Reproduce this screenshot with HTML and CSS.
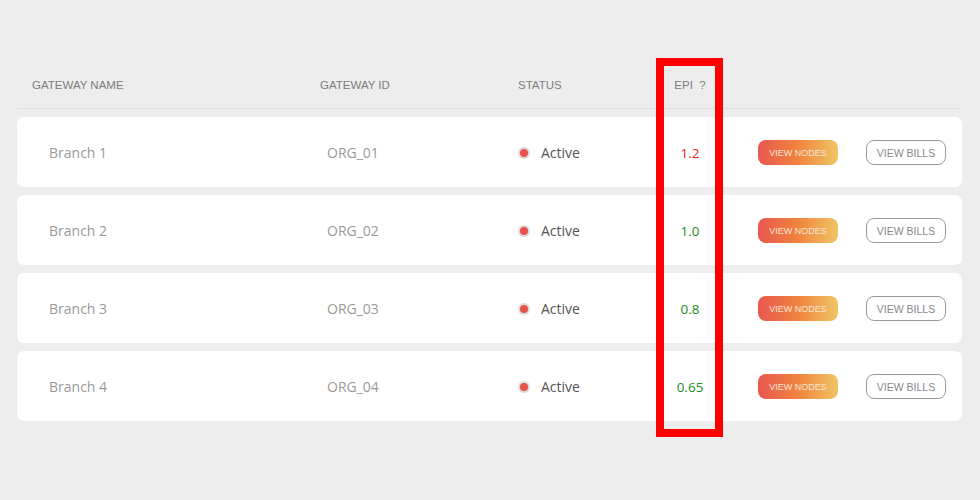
FILE: index.html
```html
<!DOCTYPE html>
<html>
<head>
<meta charset="utf-8">
<link rel="stylesheet" href="styles.css">
</head>
<body>
<div class="page">
  <div class="table">
    <div class="head">
      <div class="h h-name">GATEWAY NAME</div>
      <div class="h h-id">GATEWAY ID</div>
      <div class="h h-status">STATUS</div>
      <div class="h h-epi">EPI&nbsp; ?</div>
      <div></div>
      <div></div>
    </div>
    <div class="row">
      <div class="c-name">Branch 1</div>
      <div class="c-id">ORG_01</div>
      <div class="c-status"><span class="dot"></span>Active</div>
      <div class="c-epi red">1.2</div>
      <div class="c-nodes"><span class="btn-nodes">VIEW NODES</span></div>
      <div class="c-bills"><span class="btn-bills">VIEW BILLS</span></div>
    </div>
    <div class="row">
      <div class="c-name">Branch 2</div>
      <div class="c-id">ORG_02</div>
      <div class="c-status"><span class="dot"></span>Active</div>
      <div class="c-epi green">1.0</div>
      <div class="c-nodes"><span class="btn-nodes">VIEW NODES</span></div>
      <div class="c-bills"><span class="btn-bills">VIEW BILLS</span></div>
    </div>
    <div class="row">
      <div class="c-name">Branch 3</div>
      <div class="c-id">ORG_03</div>
      <div class="c-status"><span class="dot"></span>Active</div>
      <div class="c-epi green">0.8</div>
      <div class="c-nodes"><span class="btn-nodes">VIEW NODES</span></div>
      <div class="c-bills"><span class="btn-bills">VIEW BILLS</span></div>
    </div>
    <div class="row">
      <div class="c-name">Branch 4</div>
      <div class="c-id">ORG_04</div>
      <div class="c-status"><span class="dot"></span>Active</div>
      <div class="c-epi green">0.65</div>
      <div class="c-nodes"><span class="btn-nodes">VIEW NODES</span></div>
      <div class="c-bills"><span class="btn-bills">VIEW BILLS</span></div>
    </div>
  </div>
  <div class="highlight"></div>
</div>
</body>
</html>
```

FILE: styles.css
```css
html, body {
  margin: 0;
  padding: 0;
  background: #ededed;
}
.page {
  position: relative;
  width: 980px;
  height: 500px;
  padding: 60px 0 0 17px;
  box-sizing: border-box;
}
.table {
  width: 945px;
  display: flex;
  flex-direction: column;
  gap: 8px;
}
.head, .row {
  display: grid;
  grid-template-columns: 303px 198px 132px 80px 136px 1fr;
  align-items: center;
}
.head {
  height: 49px;
  border-bottom: 1px solid #e0e0e0;
  box-sizing: border-box;
  padding-top: 1px;
}
.h {
  font-family: "Liberation Sans", Arial, sans-serif;
  font-size: 11.5px;
  color: #7d7d7d;
}
.h-name { padding-left: 15px; }
.h-epi { text-align: center; }
.row {
  height: 70px;
  background: #fff;
  border-radius: 7px;
  font-family: "Open Sans", sans-serif;
  font-size: 14px;
  color: #9a9a9a;
  padding-top: 1px;
  box-sizing: border-box;
}
.c-name { padding-left: 32px; }
.c-id { padding-left: 7px; }
.c-status {
  display: flex;
  align-items: center;
  color: #555;
}
.dot {
  width: 8px;
  height: 8px;
  border-radius: 50%;
  background: #e9524c;
  box-shadow: 0 0 0 2px #dcdcdc;
  margin: 0 13px 0 2px;
}
.c-epi { text-align: center; font-size: 13.5px; }
.red { color: #f01818; }
.green { color: #1c8c1c; }
.c-nodes { padding-left: 28px; }
.btn-nodes, .btn-bills {
  display: inline-flex;
  align-items: center;
  justify-content: center;
  width: 80px;
  height: 25px;
  box-sizing: border-box;
  border-radius: 8px;
  font-family: "Liberation Sans", Arial, sans-serif;
}
.btn-nodes {
  background: linear-gradient(90deg, #e8574f 0%, #f0843e 50%, #f0c564 100%);
  color: #fbe6d8;
  font-size: 9px;
}
.btn-bills {
  border: 1px solid #9a9a9a;
  color: #888;
  font-size: 10.5px;
}
.highlight {
  position: absolute;
  left: 656px;
  top: 58px;
  width: 67px;
  height: 379px;
  border: 8px solid #ff0000;
  box-sizing: border-box;
}
```
